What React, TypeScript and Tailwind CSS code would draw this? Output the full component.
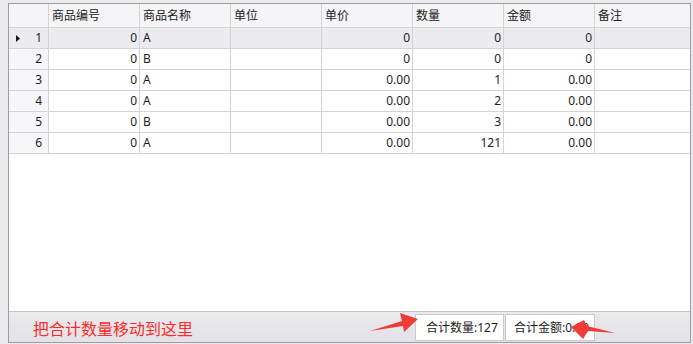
import React from "react";

const cols = ["商品编号", "商品名称", "单位", "单价", "数量", "金额", "备注"];
const rows = [
  ["0", "A", "", "0", "0", "0", ""],
  ["0", "B", "", "0", "0", "0", ""],
  ["0", "A", "", "0.00", "1", "0.00", ""],
  ["0", "A", "", "0.00", "2", "0.00", ""],
  ["0", "B", "", "0.00", "3", "0.00", ""],
  ["0", "A", "", "0.00", "121", "0.00", ""],
];
const rightAligned = [true, false, false, true, true, true, false];

export default function App() {
  return (
    <div className="relative w-[693px] h-[344px] bg-[#ebebee] pt-[3px] pl-[8px] font-['Noto_Sans','Noto_Sans_CJK_SC',sans-serif] text-[12px] text-[#1e1e1e] overflow-hidden">
      <div className="w-[683px] h-[340px] border border-[#9c9ca6] bg-white flex flex-col">
        <div className="flex-1 bg-white">
          <div className="grid grid-cols-[40px_91px_91px_91px_91px_91px_91px_1fr]">
            <div className="h-[24px] bg-[#f5f5f7] border-r border-b border-[#d3d3da]" />
            {cols.map((c, i) => (
              <div
                key={c}
                className={`h-[24px] bg-[#f5f5f7] border-b border-[#d3d3da] flex items-center pl-[3px] leading-none text-[#222] ${i < 6 ? "border-r" : ""}`}
              >
                {c}
              </div>
            ))}
            {rows.map((r, ri) => (
              <React.Fragment key={ri}>
                <div
                  className={`h-[21px] border-r border-b border-[#d3d3da] flex items-center justify-between pl-[7px] pr-[6px] leading-none ${ri === 0 ? "bg-[#ececf0]" : "bg-[#f7f7f9]"}`}
                >
                  <span className="w-[4px]">
                    {ri === 0 && (
                      <svg width="4" height="7" viewBox="0 0 4 7">
                        <polygon points="0,0 4,3.5 0,7" fill="#1a1a1a" />
                      </svg>
                    )}
                  </span>
                  <span>{ri + 1}</span>
                </div>
                {r.map((v, ci) => (
                  <div
                    key={ci}
                    className={`h-[21px] border-b border-[#d3d3da] flex items-center leading-none ${ci < 6 ? "border-r" : ""} ${rightAligned[ci] ? "justify-end pr-[2px]" : "pl-[3px]"} ${ri === 0 ? "bg-[#ececf0]" : "bg-white"}`}
                  >
                    {v}
                  </div>
                ))}
              </React.Fragment>
            ))}
          </div>
        </div>
        <div className="h-[31px] border-t border-[#c4c4cc] bg-gradient-to-b from-[#ebebee] to-[#e2e2e7] flex items-end">
          <div className="self-center mt-[4px] ml-[24px] text-[16px] leading-none text-[#ff2b2b]">
            把合计数量移动到这里
          </div>
          <div className="ml-auto mr-[95px] mb-[1px] flex gap-[1px]">
            <div className="w-[89px] h-[27px] bg-white border border-[#c9c9d0] flex items-center pl-[10px] leading-none whitespace-nowrap overflow-hidden">
              合计数量:127
            </div>
            <div className="w-[90px] h-[27px] bg-white border border-[#c9c9d0] flex items-center pl-[8px] leading-none whitespace-nowrap overflow-hidden">
              合计金额:0.00
            </div>
          </div>
        </div>
      </div>
      <svg
        className="absolute left-0 top-0 pointer-events-none"
        width="693"
        height="344"
        viewBox="0 0 693 344"
      >
        <polygon
          points="370,331 402,321 400,313 418,319 404,332 403,326"
          fill="#f23a36"
        />
        <polygon
          points="571,327 584,320 587,326 615,333 588,331 583,339"
          fill="#f23a36"
        />
      </svg>
    </div>
  );
}
